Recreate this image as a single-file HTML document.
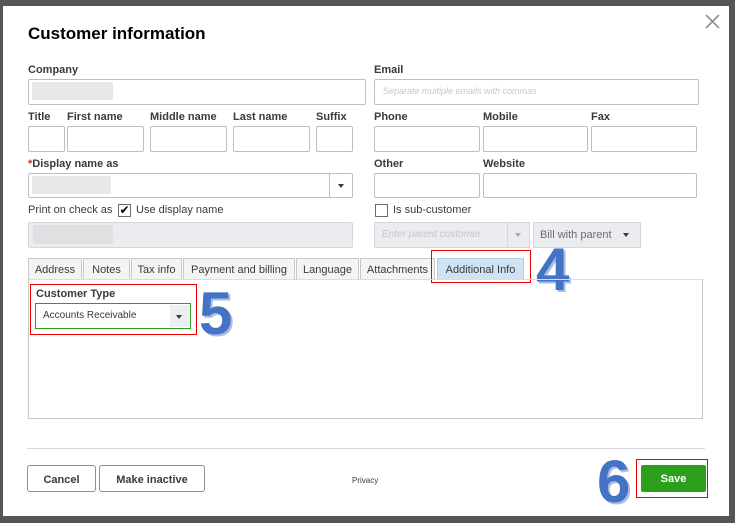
<!DOCTYPE html>
<html><head><style>
*{box-sizing:border-box;margin:0;padding:0}
body{width:735px;height:523px;background:#555;position:relative;overflow:hidden;font-family:"Liberation Sans",sans-serif;color:#393a3d}
.m{position:absolute;left:3px;top:6px;width:726px;height:510px;background:#fff}
.a{position:absolute}
.l{position:absolute;font-size:11px;font-weight:bold;color:#393a3d}
.i{position:absolute;border:1px solid #babec5;border-radius:2px;background:#fff}
.g{position:absolute;background:#e8e8e8}
.tab{position:absolute;top:258px;height:22px;border:1px solid #c8c8c8;border-bottom:none;background:#f4f4f4;font-size:11px;text-align:center;line-height:22px;color:#393a3d}
.num{position:absolute;font-size:60px;font-weight:bold;color:#4472c4;font-family:"Liberation Sans",sans-serif;text-shadow:2px 2px 0 #a9bde3;line-height:1}
.btn{position:absolute;top:465px;height:27px;border:1px solid #8d9096;border-radius:3px;font-size:11px;font-weight:bold;text-align:center;line-height:29px;color:#393a3d;background:#fff}
.tri{position:absolute;width:0;height:0;border-left:3.5px solid transparent;border-right:3.5px solid transparent;border-top:4px solid #393a3d}
</style></head><body>
<div class="m"></div>
<svg class="a" style="left:705px;top:14px" width="15" height="15"><path d="M1 1L14 14M14 1L1 14" stroke="#8d9096" stroke-width="1.6"/></svg>
<div class="a" style="left:28px;top:24px;font-size:17px;font-weight:bold;color:#000">Customer information</div>

<div class="l" style="left:28px;top:64px">Company</div>
<div class="i" style="left:28px;top:79px;width:338px;height:26px"></div>
<div class="g" style="left:32px;top:82px;width:81px;height:18px"></div>
<div class="l" style="left:374px;top:64px">Email</div>
<div class="i" style="left:374px;top:79px;width:325px;height:26px"></div>
<div class="a" style="left:383px;top:86px;font-size:9px;font-style:italic;color:#c4c6ca">Separate multiple emails with commas</div>

<div class="l" style="left:28px;top:111px">Title</div>
<div class="l" style="left:67px;top:111px">First name</div>
<div class="l" style="left:150px;top:111px">Middle name</div>
<div class="l" style="left:233px;top:111px">Last name</div>
<div class="l" style="left:316px;top:111px">Suffix</div>
<div class="l" style="left:374px;top:111px">Phone</div>
<div class="l" style="left:483px;top:111px">Mobile</div>
<div class="l" style="left:591px;top:111px">Fax</div>
<div class="i" style="left:28px;top:126px;width:37px;height:26px"></div>
<div class="i" style="left:67px;top:126px;width:77px;height:26px"></div>
<div class="i" style="left:150px;top:126px;width:77px;height:26px"></div>
<div class="i" style="left:233px;top:126px;width:77px;height:26px"></div>
<div class="i" style="left:316px;top:126px;width:37px;height:26px"></div>
<div class="i" style="left:374px;top:126px;width:106px;height:26px"></div>
<div class="i" style="left:483px;top:126px;width:105px;height:26px"></div>
<div class="i" style="left:591px;top:126px;width:106px;height:26px"></div>

<div class="l" style="left:28px;top:158px"><span style="color:#d52b1e">*</span>Display name as</div>
<div class="i" style="left:28px;top:173px;width:325px;height:25px"></div>
<div class="a" style="left:329px;top:174px;width:1px;height:23px;background:#babec5"></div>
<div class="tri" style="left:338px;top:184px"></div>
<div class="g" style="left:32px;top:176px;width:79px;height:18px"></div>
<div class="l" style="left:374px;top:158px">Other</div>
<div class="l" style="left:483px;top:158px">Website</div>
<div class="i" style="left:374px;top:173px;width:106px;height:25px"></div>
<div class="i" style="left:483px;top:173px;width:214px;height:25px"></div>

<div class="a" style="left:28px;top:204px;font-size:11px">Print on check as</div>
<div class="a" style="left:118px;top:204px;width:13px;height:13px;border:1px solid #6b6c72;font-size:12px;line-height:11px;text-align:center;color:#000">✔</div>
<div class="a" style="left:136px;top:204px;font-size:11px">Use display name</div>
<div class="a" style="left:28px;top:222px;width:325px;height:26px;background:#ebecef;border:1px solid #d4d7dc;border-radius:2px"></div>
<div class="g" style="left:33px;top:225px;width:80px;height:19px;background:#e0e0e2"></div>
<div class="a" style="left:375px;top:204px;width:13px;height:13px;border:1px solid #6b6c72"></div>
<div class="a" style="left:393px;top:204px;font-size:11px">Is sub-customer</div>
<div class="a" style="left:374px;top:222px;width:156px;height:26px;background:#ebecef;border:1px solid #d4d7dc"></div>
<div class="a" style="left:507px;top:222px;width:1px;height:26px;background:#d4d7dc"></div>
<div class="tri" style="left:515px;top:233px;border-top-color:#aaa"></div>
<div class="a" style="left:382px;top:229px;font-size:10px;font-style:italic;color:#c4c6ca">Enter parent customer</div>
<div class="a" style="left:533px;top:222px;width:108px;height:26px;background:#ebecef;border:1px solid #d4d7dc"></div>
<div class="a" style="left:540px;top:229px;font-size:11px;color:#6b6c72">Bill with parent</div>
<div class="tri" style="left:623px;top:233px"></div>

<div class="tab" style="left:28px;width:54px">Address</div>
<div class="tab" style="left:83px;width:47px">Notes</div>
<div class="tab" style="left:131px;width:51px">Tax info</div>
<div class="tab" style="left:183px;width:112px">Payment and billing</div>
<div class="tab" style="left:296px;width:63px">Language</div>
<div class="tab" style="left:360px;width:75px">Attachments</div>
<div class="tab" style="left:437px;width:87px;background:#cfe3f5;border-color:#b5cde4">Additional Info</div>
<div class="a" style="left:431px;top:250px;width:100px;height:33px;border:1px solid #e00"></div>
<div class="num" style="left:536px;top:240px">4</div>

<div class="a" style="left:28px;top:279px;width:675px;height:140px;border:1px solid #c8c8c8;border-top:1px solid #ddd"></div>
<div class="a" style="left:30px;top:284px;width:167px;height:51px;border:1px solid #e00"></div>
<div class="l" style="left:36px;top:288px">Customer Type</div>
<div class="a" style="left:35px;top:303px;width:156px;height:26px;border:1px solid #2ca01c"></div>
<div class="a" style="left:170px;top:305px;width:19px;height:22px;background:#eceef1"></div>
<div class="tri" style="left:176px;top:315px"></div>
<div class="a" style="left:43px;top:310px;font-size:10px;color:#393a3d">Accounts Receivable</div>
<div class="num" style="left:199px;top:284px">5</div>

<div class="a" style="left:27px;top:448px;width:678px;height:1px;background:#d4d7dc"></div>
<div class="btn" style="left:27px;width:69px">Cancel</div>
<div class="btn" style="left:99px;width:106px">Make inactive</div>
<div class="a" style="left:352px;top:476px;font-size:8px;color:#393a3d">Privacy</div>
<div class="num" style="left:597px;top:452px">6</div>
<div class="a" style="left:636px;top:459px;width:72px;height:39px;border:1px solid #e00"></div>
<div class="a" style="left:641px;top:465px;width:65px;height:27px;background:#2ca01c;border-radius:2px;color:#fff;font-size:11px;font-weight:bold;text-align:center;line-height:29px">Save</div>
</body></html>
